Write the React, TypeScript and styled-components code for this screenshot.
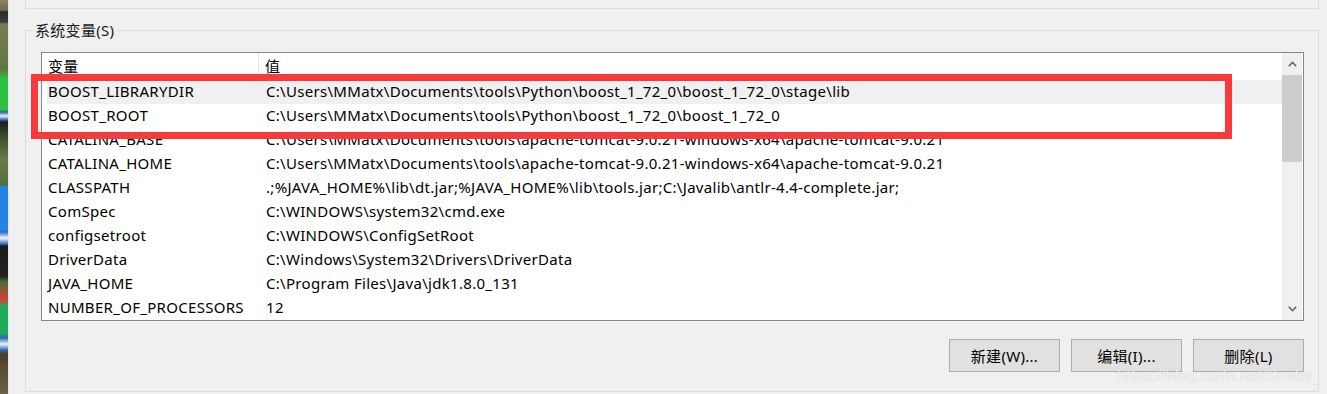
import styled, { createGlobalStyle } from "styled-components";

const GlobalStyle = createGlobalStyle`
  html, body {
    margin: 0;
    padding: 0;
    background: #f0f0f0;
  }
  body {
    font-family: "Noto Sans", "Noto Sans CJK SC", sans-serif;
    font-size: 15px;
    letter-spacing: 0.3px;
    color: #000;
  }
`;

const Page = styled.div`
  position: relative;
  display: flex;
  width: 1327px;
  height: 394px;
  overflow: hidden;
`;

// sliver of the desktop wallpaper showing at the left edge
const Wallpaper = styled.div`
  width: 8px;
  flex-shrink: 0;
  border-right: 1px solid #e6e6e6;
  background: linear-gradient(
    to bottom,
    #8c8466 0px,
    #6f6a4a 10px,
    #2a2a2a 12px,
    #3b3b3b 22px,
    #7d7c55 24px,
    #5f7740 70px,
    #2fc042 78px,
    #2fc042 110px,
    #2c5fa8 112px,
    #e8eef8 116px,
    #2c5fa8 120px,
    #1e1e1e 122px,
    #3d4a2a 136px,
    #6b7a48 160px,
    #56703c 185px,
    #2384e6 187px,
    #2384e6 230px,
    #2e6bbf 232px,
    #f2f6fc 238px,
    #2e6bbf 244px,
    #1a1a1a 246px,
    #222 276px,
    #4f6a33 282px,
    #d8403a 300px,
    #1faa5c 306px,
    #1faa5c 334px,
    #2f66b5 338px,
    #eef3fb 344px,
    #2f66b5 350px,
    #4a3d2a 354px,
    #6b6446 394px
  );
`;

const Main = styled.div`
  flex: 1;
  display: flex;
  flex-direction: column;
  padding: 0 8px 0 16px;
`;

const UpperGroupEnd = styled.div`
  height: 8px;
  border: 1px solid #dcdcdc;
  border-top: none;
`;

const GroupBox = styled.fieldset`
  margin: 12px 0 0;
  padding: 0 14px 0 15px;
  height: 371px;
  box-sizing: border-box;
  border: 1px solid #dcdcdc;
  display: flex;
  flex-direction: column;
`;

const GroupTitle = styled.legend`
  margin-left: -9px;
  padding: 0 3px;
  font-size: 15px;
  line-height: 18px;
  color: #1a1a1a;
`;

const ListBox = styled.div`
  margin-top: 13px;
  height: 269px;
  box-sizing: border-box;
  border: 1px solid #828790;
  background: #fff;
  display: flex;
  overflow: hidden;
`;

const Table = styled.div`
  flex: 1;
  display: flex;
  flex-direction: column;
  overflow: hidden;
`;

const HeaderRow = styled.div`
  display: flex;
  height: 27px;
  flex-shrink: 0;
`;

const HeaderCell = styled.div<{ $width?: number }>`
  width: ${(p) => (p.$width ? `${p.$width}px` : "auto")};
  flex: ${(p) => (p.$width ? "none" : 1)};
  box-sizing: border-box;
  padding-left: 6px;
  border-right: ${(p) => (p.$width ? "1px solid #e5e5e5" : "none")};
  line-height: 27px;
  white-space: nowrap;
`;

const Row = styled.div<{ $hover?: boolean }>`
  display: flex;
  height: 24px;
  flex-shrink: 0;
  margin-left: 5px;
  background: ${(p) => (p.$hover ? "#f0f0f0" : "transparent")};
`;

const Cell = styled.div<{ $width?: number }>`
  width: ${(p) => (p.$width ? `${p.$width}px` : "auto")};
  flex: ${(p) => (p.$width ? "none" : 1)};
  box-sizing: border-box;
  padding-left: 1px;
  line-height: 22px;
  white-space: nowrap;
  overflow: hidden;
`;

const ScrollBar = styled.div`
  width: 20px;
  flex-shrink: 0;
  margin-right: 1px;
  background: #f0f0f0;
  display: flex;
  flex-direction: column;
`;

const ScrollArrow = styled.div`
  height: 22px;
  display: flex;
  align-items: center;
  justify-content: center;
  color: #606060;
`;

const ScrollTrack = styled.div`
  flex: 1;
`;

const ScrollThumb = styled.div`
  height: 87px;
  background: #cdcdcd;
`;

const ButtonRow = styled.div`
  display: flex;
  justify-content: flex-end;
  gap: 11px;
  margin-top: 18px;
`;

const Button = styled.button`
  width: 111px;
  height: 33px;
  box-sizing: border-box;
  border: 1px solid #adadad;
  background: #e1e1e1;
  font-family: "Noto Sans", "Noto Sans CJK SC", sans-serif;
  font-size: 15px;
  letter-spacing: 0.3px;
  color: #000;
  padding: 0;
`;

const Annotation = styled.div`
  position: absolute;
  left: 31px;
  top: 74px;
  width: 1201px;
  height: 65px;
  box-sizing: border-box;
  border: 7px solid #f93a3d;
  pointer-events: none;
`;

const Watermark = styled.div`
  position: absolute;
  left: 1117px;
  top: 367px;
  font-family: "Liberation Sans", Arial, sans-serif;
  font-size: 16px;
  letter-spacing: 0.1px;
  color: rgba(255, 255, 255, 0.8);
  text-shadow: 0 0 1px rgba(110, 110, 110, 0.4);
  white-space: nowrap;
`;

const Chevron = ({ up }: { up?: boolean }) => (
  <svg width="9" height="6" viewBox="0 0 9 6">
    <path
      d={up ? "M0.8 5.2 L4.5 1.3 L8.2 5.2" : "M0.8 0.8 L4.5 4.7 L8.2 0.8"}
      fill="none"
      stroke="currentColor"
      strokeWidth="1.6"
    />
  </svg>
);

const TOMCAT =
  "C:\\Users\\MMatx\\Documents\\tools\\apache-tomcat-9.0.21-windows-x64\\apache-tomcat-9.0.21";

const variables: [string, string][] = [
  [
    "BOOST_LIBRARYDIR",
    "C:\\Users\\MMatx\\Documents\\tools\\Python\\boost_1_72_0\\boost_1_72_0\\stage\\lib",
  ],
  [
    "BOOST_ROOT",
    "C:\\Users\\MMatx\\Documents\\tools\\Python\\boost_1_72_0\\boost_1_72_0",
  ],
  ["CATALINA_BASE", TOMCAT],
  ["CATALINA_HOME", TOMCAT],
  [
    "CLASSPATH",
    ".;%JAVA_HOME%\\lib\\dt.jar;%JAVA_HOME%\\lib\\tools.jar;C:\\Javalib\\antlr-4.4-complete.jar;",
  ],
  ["ComSpec", "C:\\WINDOWS\\system32\\cmd.exe"],
  ["configsetroot", "C:\\WINDOWS\\ConfigSetRoot"],
  ["DriverData", "C:\\Windows\\System32\\Drivers\\DriverData"],
  ["JAVA_HOME", "C:\\Program Files\\Java\\jdk1.8.0_131"],
  ["NUMBER_OF_PROCESSORS", "12"],
];

const App = () => {
  return (
    <Page>
      <GlobalStyle />
      <Wallpaper />
      <Main>
        <UpperGroupEnd />
        <GroupBox>
          <GroupTitle>系统变量(S)</GroupTitle>
          <ListBox>
            <Table>
              <HeaderRow>
                <HeaderCell $width={217}>变量</HeaderCell>
                <HeaderCell>值</HeaderCell>
              </HeaderRow>
              {variables.map(([name, value], i) => (
                <Row key={name} $hover={i === 0}>
                  <Cell $width={218}>{name}</Cell>
                  <Cell>{value}</Cell>
                </Row>
              ))}
            </Table>
            <ScrollBar>
              <ScrollArrow>
                <Chevron up />
              </ScrollArrow>
              <ScrollTrack>
                <ScrollThumb />
              </ScrollTrack>
              <ScrollArrow>
                <Chevron />
              </ScrollArrow>
            </ScrollBar>
          </ListBox>
          <ButtonRow>
            <Button>新建(W)...</Button>
            <Button>编辑(I)...</Button>
            <Button>删除(L)</Button>
          </ButtonRow>
        </GroupBox>
      </Main>
      <Annotation />
      <Watermark>https://blog.csdn.net/Smiler_</Watermark>
    </Page>
  );
};

export default App;
